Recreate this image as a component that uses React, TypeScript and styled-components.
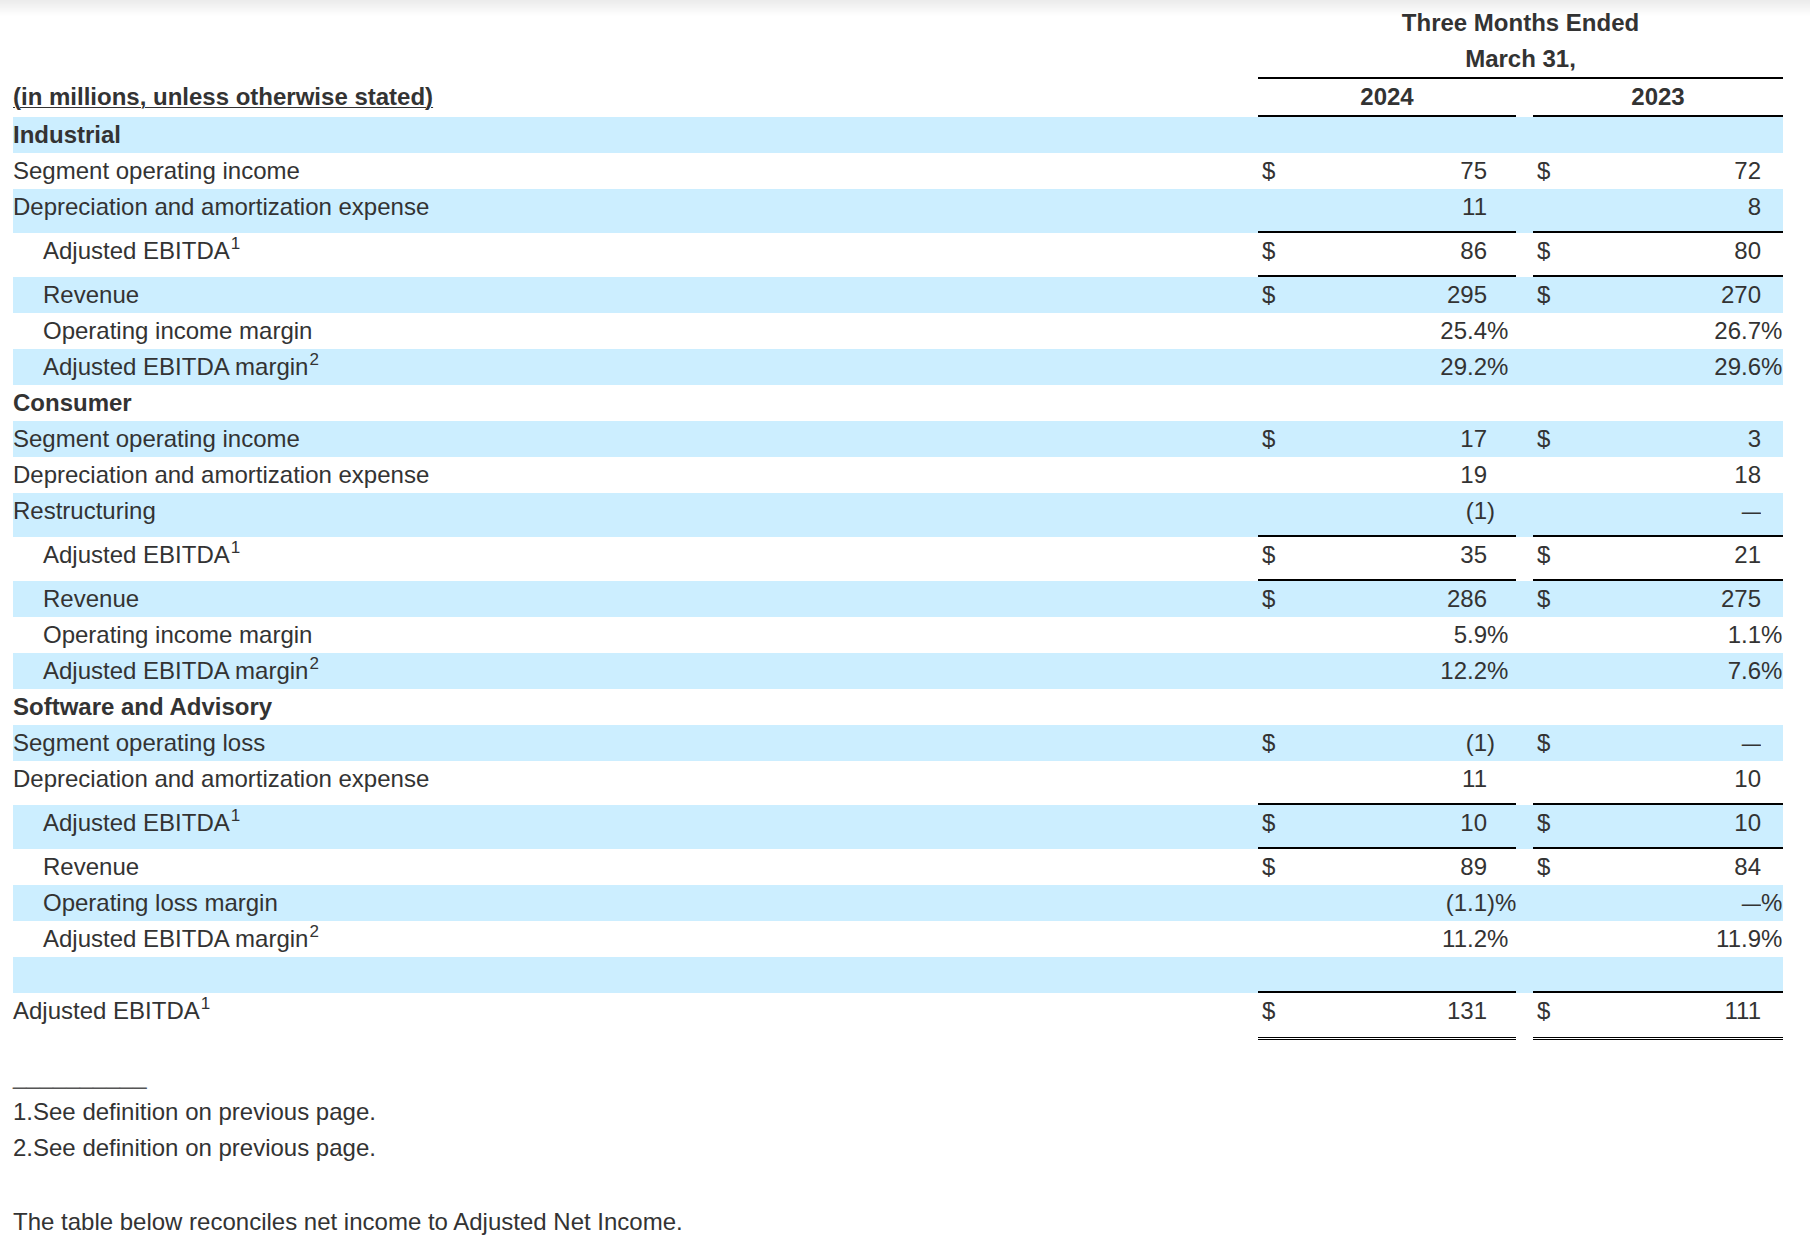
import React from 'react';
import styled, { createGlobalStyle, css } from 'styled-components';

const GlobalStyle = createGlobalStyle`
  html, body { margin: 0; padding: 0; background: #ffffff; }
  body {
    font-family: "Liberation Sans", Arial, Helvetica, sans-serif;
    color: #333333;
    font-size: 24px;
  }
`;

const TopShade = styled.div`
  position: fixed;
  top: 0;
  left: 0;
  right: 0;
  height: 16px;
  background: linear-gradient(to bottom, rgba(0, 0, 0, 0.08), rgba(0, 0, 0, 0));
  pointer-events: none;
`;

const Page = styled.main`
  padding: 5px 27px 0 13px;
`;

const Table = styled.table`
  width: 1770px;
  table-layout: fixed;
  border-collapse: separate;
  border-spacing: 0;
`;

type Rule = 'none' | 'single' | 'thin' | 'double';

const Row = styled.tr<{ $shaded?: boolean }>`
  background: ${(p) => (p.$shaded ? '#cceeff' : 'transparent')};
`;

const padFor = (r: Rule) => (r === 'single' ? 6 : r === 'double' ? 8 : 0);

const baseCell = css<{ $rule?: Rule }>`
  padding: 0 0 ${(p) => padFor(p.$rule ?? 'none')}px 0;
  line-height: 36px;
  vertical-align: top;
  white-space: nowrap;
  overflow: visible;
`;

const LabelCell = styled.td<{ $rule?: Rule; $indent?: boolean; $bold?: boolean }>`
  ${baseCell};
  padding-left: ${(p) => (p.$indent ? 30 : 0)}px;
  font-weight: ${(p) => (p.$bold ? 700 : 400)};
`;

const ruled = css<{ $rule?: Rule; $underline?: boolean }>`
  border-bottom: ${(p) =>
    p.$underline
      ? p.$rule === 'double'
        ? '3px double #000'
        : '2px solid #000'
      : 'none'};
`;

const DollarCell = styled.td<{ $rule?: Rule; $underline?: boolean }>`
  ${baseCell};
  ${ruled};
  padding-left: 4px;
  text-align: left;
`;

const NumCell = styled.td<{ $rule?: Rule; $underline?: boolean }>`
  ${baseCell};
  ${ruled};
  text-align: right;
`;

const SufCell = styled.td<{ $rule?: Rule; $underline?: boolean }>`
  ${baseCell};
  ${ruled};
  text-align: left;
`;

const Spacer = styled.td<{ $rule?: Rule }>`
  ${baseCell};
`;

const Dash = styled.span`
  display: inline-block;
  transform: scaleX(0.8);
  transform-origin: right center;
`;

const HeadCell = styled.td<{ $line?: boolean }>`
  line-height: 36px;
  padding: 0;
  vertical-align: top;
  text-align: center;
  font-weight: 700;
  white-space: nowrap;
  border-bottom: ${(p) => (p.$line ? '2px solid #000' : 'none')};
`;

const UnitsLabel = styled.td`
  line-height: 36px;
  padding: 0;
  vertical-align: top;
  font-weight: 700;
  white-space: nowrap;
  text-decoration: underline;
  text-decoration-thickness: 1px;
  text-underline-offset: 2px;
`;

const Sup = styled.sup`
  font-size: 17px;
  line-height: 0;
  vertical-align: 10px;
  margin-left: 1px;
`;

const Notes = styled.section`
  margin-top: 18px;
  line-height: 36px;
`;

const NoteRule = styled.div`
  color: #555;
`;

const Note = styled.div``;

const Para = styled.p`
  margin: 38px 0 0 0;
  line-height: 36px;
`;

type Val = { num: string; suf?: string };
type Line = {
  label: string;
  sup?: string;
  kind: 'section' | 'item' | 'sub' | 'total' | 'blank';
  a?: Val;
  b?: Val;
  dollar?: boolean;
  rule?: Rule;
};

const lines: Line[] = [
  { label: 'Industrial', kind: 'section' },
  { label: 'Segment operating income', kind: 'item', dollar: true, a: { num: '75' }, b: { num: '72' } },
  { label: 'Depreciation and amortization expense', kind: 'item', rule: 'single', a: { num: '11' }, b: { num: '8' } },
  { label: 'Adjusted EBITDA', sup: '1', kind: 'sub', dollar: true, rule: 'single', a: { num: '86' }, b: { num: '80' } },
  { label: 'Revenue', kind: 'sub', dollar: true, a: { num: '295' }, b: { num: '270' } },
  { label: 'Operating income margin', kind: 'sub', a: { num: '25.4', suf: '%' }, b: { num: '26.7', suf: '%' } },
  { label: 'Adjusted EBITDA margin', sup: '2', kind: 'sub', a: { num: '29.2', suf: '%' }, b: { num: '29.6', suf: '%' } },
  { label: 'Consumer', kind: 'section' },
  { label: 'Segment operating income', kind: 'item', dollar: true, a: { num: '17' }, b: { num: '3' } },
  { label: 'Depreciation and amortization expense', kind: 'item', a: { num: '19' }, b: { num: '18' } },
  { label: 'Restructuring', kind: 'item', rule: 'single', a: { num: '(1', suf: ')' }, b: { num: '—' } },
  { label: 'Adjusted EBITDA', sup: '1', kind: 'sub', dollar: true, rule: 'single', a: { num: '35' }, b: { num: '21' } },
  { label: 'Revenue', kind: 'sub', dollar: true, a: { num: '286' }, b: { num: '275' } },
  { label: 'Operating income margin', kind: 'sub', a: { num: '5.9', suf: '%' }, b: { num: '1.1', suf: '%' } },
  { label: 'Adjusted EBITDA margin', sup: '2', kind: 'sub', a: { num: '12.2', suf: '%' }, b: { num: '7.6', suf: '%' } },
  { label: 'Software and Advisory', kind: 'section' },
  { label: 'Segment operating loss', kind: 'item', dollar: true, a: { num: '(1', suf: ')' }, b: { num: '—' } },
  { label: 'Depreciation and amortization expense', kind: 'item', rule: 'single', a: { num: '11' }, b: { num: '10' } },
  { label: 'Adjusted EBITDA', sup: '1', kind: 'sub', dollar: true, rule: 'single', a: { num: '10' }, b: { num: '10' } },
  { label: 'Revenue', kind: 'sub', dollar: true, a: { num: '89' }, b: { num: '84' } },
  { label: 'Operating loss margin', kind: 'sub', a: { num: '(1.1', suf: ')%' }, b: { num: '—', suf: '%' } },
  { label: 'Adjusted EBITDA margin', sup: '2', kind: 'sub', a: { num: '11.2', suf: '%' }, b: { num: '11.9', suf: '%' } },
  { label: '', kind: 'blank', rule: 'thin' },
  { label: 'Adjusted EBITDA', sup: '1', kind: 'total', dollar: true, rule: 'double', a: { num: '131' }, b: { num: '111' } },
];

const renderNum = (n: string) => (n === '—' ? <Dash>—</Dash> : n);

const YearCells: React.FC<{ v?: Val; dollar?: boolean; rule: Rule }> = ({ v, dollar, rule }) => {
  const u = rule !== 'none';
  return (
    <>
      <DollarCell $rule={rule} $underline={u}>{dollar ? '$' : ''}</DollarCell>
      <NumCell $rule={rule} $underline={u}>{v ? renderNum(v.num) : ''}</NumCell>
      <SufCell $rule={rule} $underline={u}>{v?.suf ?? ''}</SufCell>
    </>
  );
};

export default function App() {
  return (
    <>
      <GlobalStyle />
      <TopShade />
      <Page>
        <Table>
          <colgroup>
            <col style={{ width: 1245 }} />
            <col style={{ width: 40 }} />
            <col style={{ width: 189 }} />
            <col style={{ width: 29 }} />
            <col style={{ width: 17 }} />
            <col style={{ width: 40 }} />
            <col style={{ width: 188 }} />
            <col style={{ width: 22 }} />
          </colgroup>
          <thead>
            <Row>
              <LabelCell />
              <HeadCell colSpan={7}>Three Months Ended</HeadCell>
            </Row>
            <Row>
              <LabelCell />
              <HeadCell colSpan={7} $line>
                March 31,
              </HeadCell>
            </Row>
            <Row>
              <UnitsLabel>(in millions, unless otherwise stated)</UnitsLabel>
              <HeadCell colSpan={3} $line>
                2024
              </HeadCell>
              <Spacer />
              <HeadCell colSpan={3} $line>
                2023
              </HeadCell>
            </Row>
          </thead>
          <tbody>
            {lines.map((l, i) => {
              const rule: Rule = l.rule ?? 'none';
              const shaded = i % 2 === 0;
              if (l.kind === 'section') {
                return (
                  <Row key={i} $shaded={shaded}>
                    <LabelCell $bold colSpan={8}>
                      {l.label}
                    </LabelCell>
                  </Row>
                );
              }
              return (
                <Row key={i} $shaded={shaded}>
                  <LabelCell $rule={rule} $indent={l.kind === 'sub'}>
                    {l.kind === 'blank' ? '\u00a0' : l.label}
                    {l.sup && <Sup>{l.sup}</Sup>}
                  </LabelCell>
                  <YearCells v={l.a} dollar={l.dollar} rule={rule} />
                  <Spacer $rule={rule} />
                  <YearCells v={l.b} dollar={l.dollar} rule={rule} />
                </Row>
              );
            })}
          </tbody>
        </Table>
        <Notes>
          <NoteRule>__________</NoteRule>
          <Note>1.See definition on previous page.</Note>
          <Note>2.See definition on previous page.</Note>
        </Notes>
        <Para>The table below reconciles net income to Adjusted Net Income.</Para>
      </Page>
    </>
  );
}
